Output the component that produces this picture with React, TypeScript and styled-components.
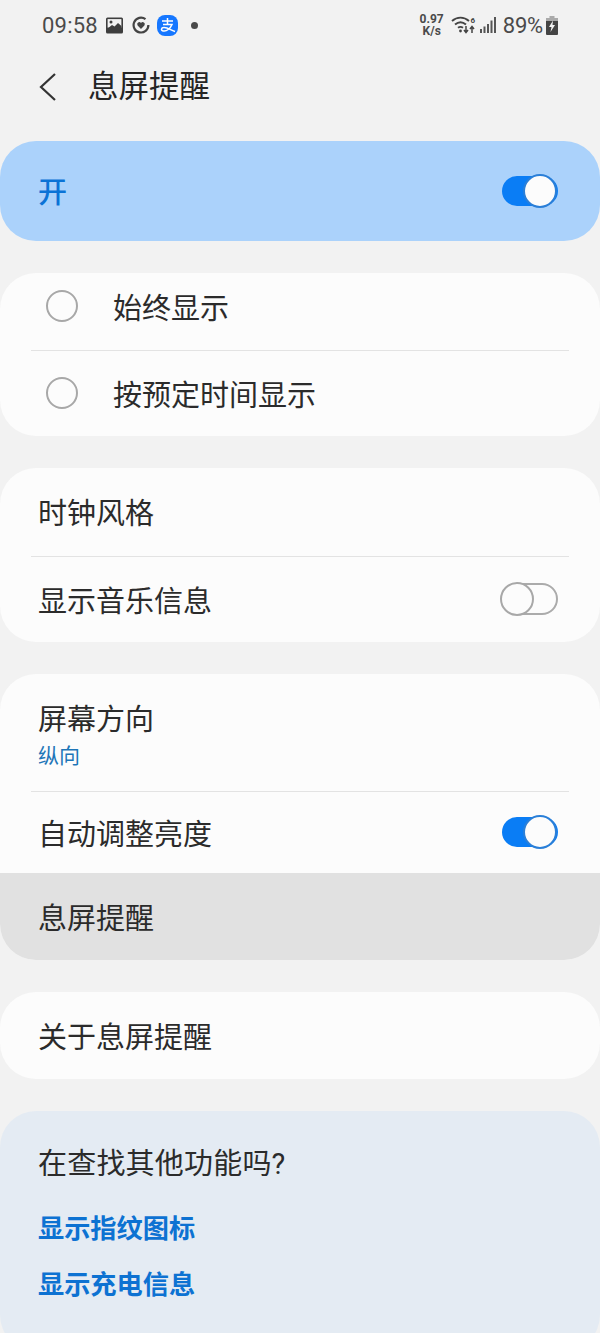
import React from 'react';
import styled, {createGlobalStyle} from 'styled-components';

const GlobalStyle = createGlobalStyle`
    html, body {
        margin: 0;
        padding: 0;
        background: #f2f2f2;
    }
    body {
        font-family: Roboto, "Noto Sans CJK SC", sans-serif;
        color: #2b2b2b;
    }
`

const Page = styled.div`
    width: 600px;
    height: 1333px;
    overflow: hidden;
    display: flex;
    flex-direction: column;
    background: #f2f2f2;
`

const StatusBar = styled.div`
    flex: none;
    height: 50px;
    padding: 0 42px 0 42px;
    display: flex;
    align-items: center;
    justify-content: space-between;
    color: #4a4a4a;
`

const StatusGroup = styled.div`
    display: flex;
    align-items: center;
`

const Clock = styled.span`
    font-size: 22px;
    letter-spacing: 0.2px;
    margin-right: 8px;
`

const Speed = styled.span`
    font-size: 12px;
    line-height: 12px;
    font-weight: 700;
    text-align: center;
    margin-right: 7px;
    display: block;
`

const Battery = styled.span`
    font-size: 22px;
    letter-spacing: -0.2px;
    margin: 0 3px 0 6px;
`

const Header = styled.div`
    flex: none;
    height: 74px;
    padding-left: 39px;
    display: flex;
    align-items: center;
    gap: 32px;
`

const Title = styled.h1`
    margin: 0 0 0 -1px;
    font-size: 30.5px;
    font-weight: 400;
    line-height: 74px;
    color: #252525;
`

const Stack = styled.div`
    flex: none;
    margin-top: 17px;
    display: flex;
    flex-direction: column;
    gap: 32px;
`

const Card = styled.section<{$tint?: string}>`
    background: ${p => p.$tint ?? '#fcfcfc'};
    border-radius: 36px;
    overflow: hidden;
`

const MasterRow = styled.div`
    height: 100px;
    padding: 0 42px 0 38px;
    display: flex;
    align-items: center;
    justify-content: space-between;
`

const MasterLabel = styled.span`
    font-size: 29px;
    font-weight: 500;
    color: #0a73d6;
    margin-top: -2px;
`

const Row = styled.div<{$height: number; $active?: boolean; $top?: number}>`
    box-sizing: border-box;
    height: ${p => p.$height}px;
    padding: ${p => p.$top ?? 0}px 42px 2px 38px;
    display: flex;
    align-items: center;
    justify-content: space-between;
    font-size: 29px;
    background: ${p => (p.$active ? '#e1e1e1' : 'transparent')};
`

const RadioRow = styled.div<{$height: number; $bottom?: number}>`
    box-sizing: border-box;
    height: ${p => p.$height}px;
    padding: 0 0 ${p => p.$bottom ?? 2}px 47px;
    display: flex;
    align-items: center;
    gap: 35px;
    font-size: 29px;
`

const Radio = styled.span`
    box-sizing: border-box;
    width: 32px;
    height: 32px;
    margin-left: -1px;
    border: 2px solid #a8a8a8;
    border-radius: 50%;
`

const Divider = styled.div`
    height: 1px;
    margin: 0 31px;
    background: #e3e3e3;
`

const TwoLine = styled.div`
    display: flex;
    flex-direction: column;
`

const RowTitle = styled.span`
    font-size: 29px;
    line-height: 38px;
`

const Sub = styled.span`
    font-size: 21px;
    line-height: 34px;
    color: #1e76b8;
`

const Track = styled.span<{$on: boolean}>`
    position: relative;
    box-sizing: border-box;
    display: block;
    width: 56px;
    height: ${p => (p.$on ? 30 : 32)}px;
    border-radius: 16px;
    background: ${p => (p.$on ? '#0a7df5' : 'transparent')};
    border: ${p => (p.$on ? 'none' : '2px solid #ababab')};
`

const Thumb = styled.span<{$on: boolean}>`
    position: absolute;
    box-sizing: border-box;
    width: 34px;
    height: 34px;
    border-radius: 50%;
    background: #fcfcfc;
    top: ${p => (p.$on ? '-2px' : '-3px')};
    ${p => (p.$on ? 'right: 1px;' : 'left: -4px;')}
    border: 2px solid ${p => (p.$on ? '#2a7fd8' : '#a8a8a8')};
`

const HelpCard = styled(Card)`
    height: 240px;
    padding: 34px 38px 0;
    box-sizing: border-box;
`

const HelpTitle = styled.div`
    font-size: 29px;
    line-height: 38px;
    margin-bottom: 29px;
    letter-spacing: 0.2px;
`

const HelpLink = styled.div`
    font-size: 26.2px;
    line-height: 34px;
    font-weight: 700;
    color: #0d72d2;
    margin-bottom: 22px;
`

const IconSlot = styled.span<{$gap: number}>`
    display: flex;
    margin-right: ${p => p.$gap}px;
`

const Toggle = ({on}: {on: boolean}) => (
    <Track $on={on}><Thumb $on={on}/></Track>
)

const PictureIcon = () => (
    <svg width="17" height="17" viewBox="0 0 17 17">
        <rect width="17" height="16" y="0.5" rx="1.5" fill="#3e3e3e"/>
        <rect x="1.6" y="2.1" width="13.8" height="8.5" fill="#f2f2f2"/>
        <circle cx="5" cy="5" r="1.5" fill="#3e3e3e"/>
        <path d="M1.6 11.5 L6 8 L8.5 9.5 L12 6 L15.4 9 V12 H1.6 Z" fill="#3e3e3e"/>
    </svg>
)

const HeartRing = () => (
    <svg width="18" height="18" viewBox="0 0 18 18">
        <path d="M13.5 3.2 A7.4 7.4 0 1 0 16.4 9" fill="none" stroke="#444" strokeWidth="2.2"/>
        <path d="M9 13 L5.6 9.4 A2 2 0 0 1 9 7 A2 2 0 0 1 12.4 9.4 Z" fill="#444"/>
    </svg>
)

const AlipayIcon = () => (
    <svg width="21" height="21" viewBox="0 0 21 21">
        <rect width="21" height="21" rx="8" fill="#1677ff"/>
        <path d="M5 6 H16 M10.5 3 V9 M6 9.5 H15 C13.5 13 10 16.5 6.5 16 C3.5 15.5 4 12.5 7 12.5 C10.5 12.5 14 15 18 16.5" fill="none" stroke="#fff" strokeWidth="1.5"/>
    </svg>
)

const Dot = styled.span`
    width: 7px;
    height: 7px;
    border-radius: 50%;
    background: #4a4a4a;
`

const WifiIcon = () => (
    <svg width="25" height="20" viewBox="0 0 25 20">
        <g fill="none" stroke="#444" strokeWidth="1.9">
            <path d="M1 6 C6 1.5 13 1.5 18 6"/>
            <path d="M4 9.5 C7.5 6.5 11.5 6.5 15 9.5"/>
            <path d="M7 12.8 C8.8 11.5 10.2 11.5 12 12.8"/>
        </g>
        <circle cx="9.5" cy="16" r="1.4" fill="#444"/>
        <path d="M15 11 V17 M13 15 L15 17.5 L17 15 M21 18 V12 M19 14 L21 11.5 L23 14" fill="none" stroke="#444" strokeWidth="1.5"/>
        <text x="19.5" y="7.5" fontSize="8" fontWeight="700" fill="#444" fontFamily="Roboto">6</text>
    </svg>
)

const SignalIcon = () => (
    <svg width="17" height="18" viewBox="0 0 17 18">
        <g fill="#555">
            <rect x="0" y="13" width="2" height="4"/>
            <rect x="3.5" y="10.5" width="2" height="6.5"/>
            <rect x="7" y="8" width="2" height="9"/>
            <rect x="10.5" y="4.5" width="2" height="12.5"/>
            <rect x="14" y="1" width="2" height="16"/>
        </g>
    </svg>
)

const BatteryIcon = () => (
    <svg width="12" height="19" viewBox="0 0 12 19">
        <rect x="3.5" y="0" width="5" height="2" fill="#aaa"/>
        <rect x="0" y="2" width="12" height="17" rx="1" fill="#444"/>
        <rect x="0" y="2" width="12" height="3" fill="#aaa"/>
        <path d="M7 4.5 L3 11 H5.5 L4.5 16 L9 9 H6.5 Z" fill="#f2f2f2"/>
    </svg>
)

const BackIcon = () => (
    <svg width="18" height="30" viewBox="0 0 18 30">
        <path d="M16 2 L2 15 L16 28" fill="none" stroke="#333" strokeWidth="2.2"/>
    </svg>
)

const App = () => (
    <Page>
        <GlobalStyle/>
        <StatusBar>
            <StatusGroup>
                <Clock>09:58</Clock>
                <IconSlot $gap={9}><PictureIcon/></IconSlot>
                <IconSlot $gap={7}><HeartRing/></IconSlot>
                <IconSlot $gap={13}><AlipayIcon/></IconSlot>
                <Dot/>
            </StatusGroup>
            <StatusGroup>
                <Speed>0.97<br/>K/s</Speed>
                <IconSlot $gap={4}><WifiIcon/></IconSlot>
                <SignalIcon/>
                <Battery>89%</Battery>
                <BatteryIcon/>
            </StatusGroup>
        </StatusBar>
        <Header>
            <BackIcon/>
            <Title>息屏提醒</Title>
        </Header>
        <Stack>
            <Card $tint="#abd2fb">
                <MasterRow><MasterLabel>开</MasterLabel><Toggle on/></MasterRow>
            </Card>
            <Card>
                <RadioRow $height={77} $bottom={11}><Radio/>始终显示</RadioRow>
                <Divider/>
                <RadioRow $height={85}><Radio/>按预定时间显示</RadioRow>
            </Card>
            <Card>
                <Row $height={88}>时钟风格</Row>
                <Divider/>
                <Row $height={85}>显示音乐信息<Toggle on={false}/></Row>
            </Card>
            <Card>
                <Row $height={117} $top={10}>
                    <TwoLine>
                        <RowTitle>屏幕方向</RowTitle>
                        <Sub>纵向</Sub>
                    </TwoLine>
                </Row>
                <Divider/>
                <Row $height={81}>自动调整亮度<Toggle on/></Row>
                <Row $height={87} $active>息屏提醒</Row>
            </Card>
            <Card>
                <Row $height={87}>关于息屏提醒</Row>
            </Card>
            <HelpCard $tint="#e4ebf3">
                <HelpTitle>在查找其他功能吗?</HelpTitle>
                <HelpLink>显示指纹图标</HelpLink>
                <HelpLink>显示充电信息</HelpLink>
            </HelpCard>
        </Stack>
    </Page>
);

export default App;
